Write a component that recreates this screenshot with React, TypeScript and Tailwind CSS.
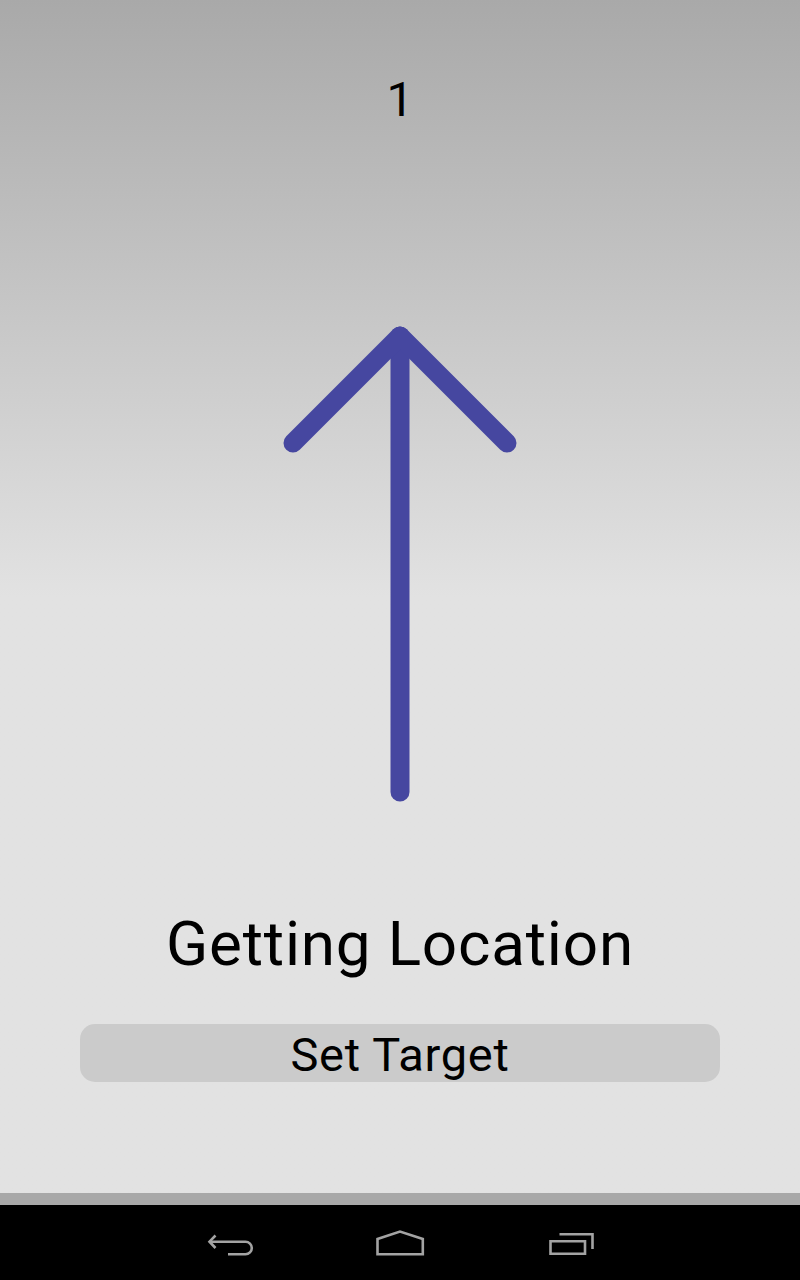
const font = { fontFamily: "Roboto, 'Noto Sans', sans-serif" };

const App = () => {
  return (
    <div className="w-[800px] h-[1280px] flex flex-col" style={font}>
      <div className="h-[1193px] flex flex-col items-center bg-linear-to-b from-[#a9a9a9] to-[#e2e2e2] to-50%">
        <div className="pt-[76px] text-[48px] leading-none text-black">1</div>
        <svg
          className="mt-[196px]"
          width="240"
          height="490"
          viewBox="0 0 240 490"
          fill="none"
          stroke="#4647a0"
          strokeWidth="19"
          strokeLinecap="round"
          strokeLinejoin="round"
        >
          <path d="M120 16 V472" />
          <path d="M13 123 L120 16 L227 123" />
        </svg>
        <div className="mt-[103px] text-[62px] leading-none tracking-[0.8px] text-black">Getting Location</div>
        <button className="mt-[49px] w-[640px] h-[58px] rounded-[15px] bg-[#cbcbcb] pt-[3px] text-[47px] leading-[55px] tracking-[0.7px] text-black">
          Set Target
        </button>
      </div>
      <div className="h-[12px] bg-[#a8a8a8]" />
      <div className="flex-1 bg-black flex items-center">
        <svg width="800" height="75" viewBox="0 1205 800 75" fill="none" stroke="#a3a3a3" strokeWidth="2.6">
          <path d="M215.5 1235.5 L209.5 1241.7 L215.5 1248" />
          <path d="M209.5 1241.7 H245.5 A6.3 6.3 0 0 1 245.5 1254.3 H228" />
          <path d="M377.5 1254.3 V1239 L400 1231.5 L422.8 1239 V1254.3 Z" />
          <path d="M550.5 1241.3 H585 V1253.8 H550.5 Z" />
          <path d="M559.5 1234.3 H592.5 V1249" />
        </svg>
      </div>
    </div>
  );
};

export default App;
